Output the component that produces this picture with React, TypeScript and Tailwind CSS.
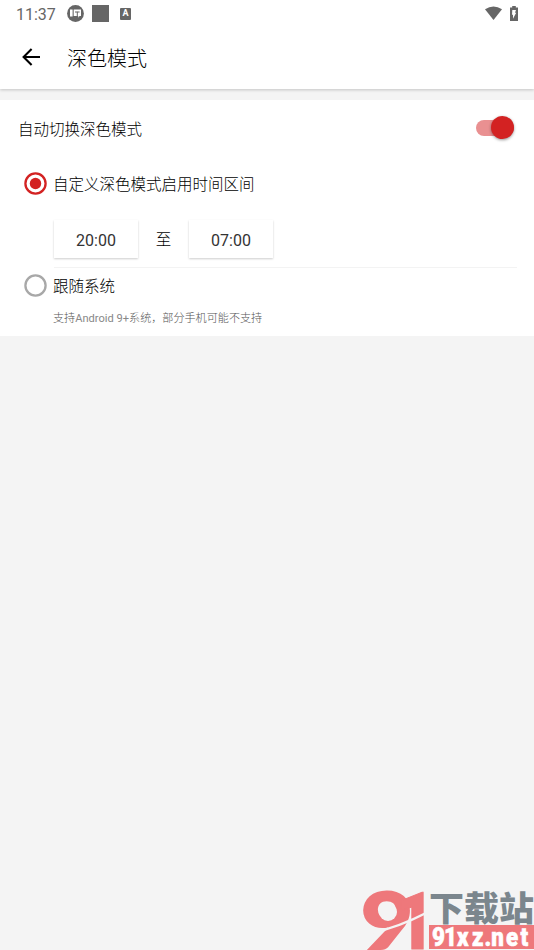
import React, { useState } from "react";

const StatusBar = () => (
  <div className="flex h-7 items-center justify-between pl-4 pr-4 text-[#666666]">
    <div className="flex items-center">
      <span className="w-[51px] whitespace-nowrap pt-px text-[16px] leading-7">
        11:37
      </span>
      <svg width="17" height="17" viewBox="0 0 17 17" className="-mt-px">
        <circle cx="8.5" cy="8.5" r="8.4" fill="#666666" />
        <path
          d="M3 4.500H5.600V11.500H3ZM6.700 4.500H14V11H12.500L11.300 12.700V11H6.700Z"
          fill="#ffffff"
        />
        <path d="M8 7H12.600M10.300 6.800V11" stroke="#666666" strokeWidth="1" />
      </svg>
      <div className="-mt-px ml-2 size-[17px] bg-[#666666]" />
      <div className="-mt-px ml-[11px] flex h-3 w-[11px] items-center justify-center rounded-[1px] bg-[#666666] text-[9px] font-bold leading-none text-white">
        A
      </div>
    </div>
    <div className="-mt-0.5 flex items-center">
      <svg width="17" height="15" viewBox="0 0 17 15">
        <path d="M0 3.200Q8.500-2.400 17 3.200L8.500 14Z" fill="#666666" />
      </svg>
      <svg width="8" height="15" viewBox="0 0 8 15" className="ml-2">
        <path d="M0 1.500H2.200V0H5.800V1.500H8V15H0Z" fill="#666666" />
        <path d="M2.300 4H6L5 6.800H6.200L3 12.700V8.700H2Z" fill="#ffffff" />
      </svg>
    </div>
  </div>
);

const Header = () => (
  <header className="relative h-[89px] bg-white shadow-[0_1px_3px_rgba(0,0,0,0.2)]">
    <StatusBar />
    <div className="flex h-[60px] items-center pl-[22px]">
      <svg width="19" height="18" viewBox="0 0 19 18" className="-mt-0.5">
        <path
          d="M18 9H1.700M9.600 1 1.600 9l8 8"
          fill="none"
          stroke="#000000"
          strokeWidth="2.100"
        />
      </svg>
      <h1 className="ml-[26px] pt-px text-[20px] font-light leading-7 text-black">
        深色模式
      </h1>
    </div>
  </header>
);

type RadioProps = { checked: boolean; onClick: () => void };

const Radio = ({ checked, onClick }: RadioProps) => (
  <button
    role="radio"
    aria-checked={checked}
    onClick={onClick}
    className="-mt-0.5 shrink-0"
  >
    <svg width="23" height="23" viewBox="0 0 23 23" className="block">
      <circle
        cx="11.5"
        cy="11.5"
        r="10.1"
        fill="none"
        strokeWidth="2.3"
        className={checked ? "stroke-[#d32222]" : "stroke-[#a8a8a8]"}
      />
      {checked && <circle cx="11.5" cy="11.5" r="5.7" fill="#d32222" />}
    </svg>
  </button>
);

const TimeBox = ({ time }: { time: string }) => (
  <button className="h-[38px] w-[84px] bg-white pt-1 text-[16px] text-[#333333] shadow-[0_0.5px_2px_rgba(0,0,0,0.2)]">
    {time}
  </button>
);

const Watermark = () => (
  <div className="pointer-events-none absolute bottom-0 right-0">
    <svg width="171" height="60" viewBox="0 0 171 60" className="block">
      <text
        x="-2"
        y="59"
        textLength="52"
        lengthAdjust="spacingAndGlyphs"
        className="fill-[#ee787b] stroke-[#ee787b] stroke-2 font-['Lato',sans-serif] text-[78px] font-black"
      >
        9
      </text>
      <text
        x="32"
        y="59"
        textLength="40"
        lengthAdjust="spacingAndGlyphs"
        className="fill-[#ee787b] stroke-[#ee787b] stroke-1 font-['Roboto',sans-serif] text-[79px] font-black"
      >
        1
      </text>
      <circle cx="25" cy="22" r="9" fill="#f4f4f4" />
      <path d="M9 43Q36 37 63 23" stroke="#f4f4f4" strokeWidth="2.500" fill="none" />
      <text
        x="66"
        y="31"
        textLength="105"
        lengthAdjust="spacingAndGlyphs"
        className="fill-[#7b868d] font-['Noto_Sans_CJK_SC',sans-serif] text-[34px] font-black"
      >
        下载站
      </text>
      <rect x="66" y="35" width="105" height="24" fill="#ee787b" />
      <text
        transform="translate(69 56) scale(0.86 1)"
        x="0 14 29 46.5 61 69 86 103"
        y="0"
        className="fill-white stroke-white stroke-[0.6px] font-['Roboto',sans-serif] text-[26px] font-black"
      >
        91xz.net
      </text>
    </svg>
  </div>
);

const App = () => {
  const [auto, setAuto] = useState(true);
  const [mode, setMode] = useState<"custom" | "system">("custom");

  return (
    <div className="relative h-[950px] w-full overflow-hidden bg-[#f4f4f4] font-['Roboto','Noto_Sans_CJK_SC',sans-serif] text-black">
      <Header />
      <main className="mt-[11px] h-[236px] bg-white">
        <div className="flex h-14 items-center justify-between pl-[18px] pr-5">
          <span className="pt-[3px] text-[15.5px] font-light leading-6">
            自动切换深色模式
          </span>
          <button
            role="switch"
            aria-checked={auto}
            onClick={() => setAuto(!auto)}
            className={`-mt-px flex h-4 w-[38px] items-center rounded-full ${
              auto ? "justify-end bg-[#e99091]" : "bg-gray-300"
            }`}
          >
            <span
              className={`size-[23px] shrink-0 rounded-full shadow-[0_1px_3px_rgba(0,0,0,0.4)] ${
                auto ? "bg-[#d32222]" : "bg-white"
              }`}
            />
          </button>
        </div>
        <div className="flex h-14 items-center pl-6">
          <Radio checked={mode === "custom"} onClick={() => setMode("custom")} />
          <span className="ml-1.5 pt-0.5 text-[15.5px] font-light leading-6">
            自定义深色模式启用时间区间
          </span>
        </div>
        <div className="ml-[54px] mr-[17px] flex h-14 items-center border-b border-[#f3f3f3] pb-0.5">
          <TimeBox time="20:00" />
          <span className="w-[51px] pt-[5px] text-center text-[15.5px] font-light">
            至
          </span>
          <TimeBox time="07:00" />
        </div>
        <div className="flex h-9 items-center pl-6">
          <Radio checked={mode === "system"} onClick={() => setMode("system")} />
          <span className="ml-1.5 pt-0.5 text-[15.5px] font-light leading-6">
            跟随系统
          </span>
        </div>
        <p className="ml-[53px] mt-[5px] text-[11.1px] font-light leading-5 text-[#555555]">
          支持<span className="font-normal text-[#888888]">Android 9+</span>
          系统，部分手机可能不支持
        </p>
      </main>
      <Watermark />
    </div>
  );
};

export default App;
